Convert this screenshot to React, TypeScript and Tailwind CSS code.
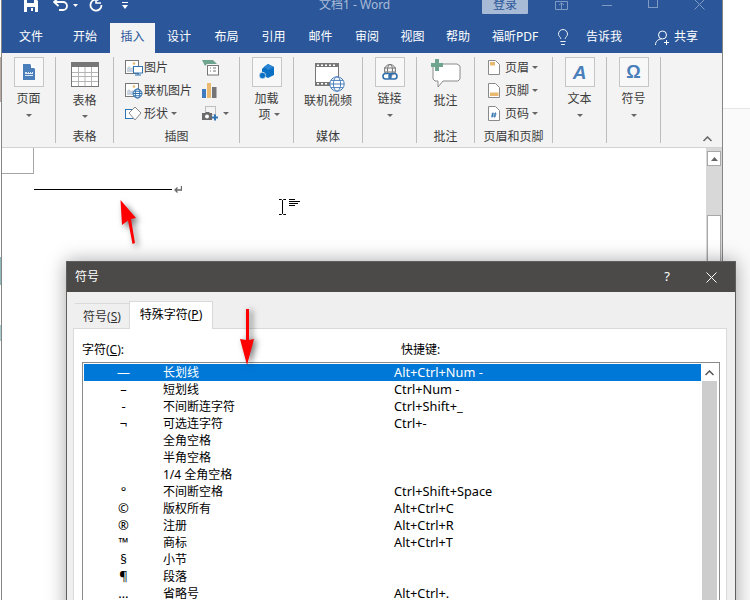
import type { ReactNode } from "react";
import { Lightbulb } from "lucide-react";

const tabs = [
  { label: "文件", w: "w-[58px]" },
  { label: "开始", w: "w-[50px]" },
  { label: "插入", w: "w-[45px]", active: true },
  { label: "设计", w: "w-[48px]" },
  { label: "布局", w: "w-[47px]" },
  { label: "引用", w: "w-[47px]" },
  { label: "邮件", w: "w-[47px]" },
  { label: "审阅", w: "w-[46px]" },
  { label: "视图", w: "w-[45px]" },
  { label: "帮助", w: "w-[46px]" },
];

const rows = [
  ["—", "长划线", "Alt+Ctrl+Num -"],
  ["–", "短划线", "Ctrl+Num -"],
  ["-", "不间断连字符", "Ctrl+Shift+_"],
  ["¬", "可选连字符", "Ctrl+-"],
  ["", "全角空格", ""],
  ["", "半角空格", ""],
  ["", "1/4 全角空格", ""],
  ["°", "不间断空格", "Ctrl+Shift+Space"],
  ["©", "版权所有", "Alt+Ctrl+C"],
  ["®", "注册", "Alt+Ctrl+R"],
  ["™", "商标", "Alt+Ctrl+T"],
  ["§", "小节", ""],
  ["¶", "段落", ""],
  ["…", "省略号", "Alt+Ctrl+."],
];

const Caret = ({ className = "" }: { className?: string }) => (
  <svg width="6" height="3" viewBox="0 0 6 3" className={className}>
    <path d="M0 0h6L3 3z" fill="#666" />
  </svg>
);

const Globe = ({ x, y, r, color }: { x: number; y: number; r: number; color: string }) => (
  <g stroke={color} fill="#fff" strokeWidth="1">
    <circle cx={x} cy={y} r={r} />
    <ellipse cx={x} cy={y} rx={r / 2} ry={r} fill="none" />
    <path d={`M${x - r} ${y}h${r * 2}M${x - r + 1} ${y - r / 2}h${r * 2 - 2}M${x - r + 1} ${y + r / 2}h${r * 2 - 2}`} fill="none" />
  </g>
);

const PictureBase = () => (
  <>
    <rect x="0.5" y="0.5" width="13" height="13" fill="#fff" stroke="#777" />
    <path d="M2 12V8l2-2 2 2 2-1v5z" fill="#c9d3df" />
    <circle cx="9" cy="3.5" r="1.3" fill="#e8b96f" />
  </>
);

const PictureIcon = () => (
  <svg width="18" height="16" viewBox="0 0 18 16">
    <PictureBase />
    <rect x="8.5" y="6.5" width="9" height="6.5" fill="#fff" stroke="#2f75b5" />
    <path d="M13 13v2M10 15h6" stroke="#2f75b5" />
  </svg>
);

const OnlinePictureIcon = () => (
  <svg width="18" height="16" viewBox="0 0 18 16">
    <PictureBase />
    <Globe x={12.5} y={10.5} r={4.5} color="#2f6fad" />
  </svg>
);

const ShapesIcon = () => (
  <svg width="17" height="15" viewBox="0 0 17 15">
    <rect x="0.5" y="3.5" width="10" height="9" fill="#fff" stroke="#2f75b5" />
    <path d="M10 1l6 6-6 7-6-7z" fill="#fff" stroke="#8a8a8a" />
  </svg>
);

const SmartArtIcon = () => (
  <svg width="17" height="16" viewBox="0 0 17 16">
    <path d="M0 0h11l4 4H5L3 6z" fill="#6fa58f" />
    <rect x="5.5" y="5.5" width="11" height="9.5" fill="#fff" stroke="#777" />
    <path d="M8 8h1M11 8h3M8 11h1M11 11h3" stroke="#777" />
  </svg>
);

const ChartIcon = () => (
  <svg width="15" height="15" viewBox="0 0 15 15">
    <rect x="0" y="6" width="4" height="9" fill="#3f7cbf" />
    <rect x="5" y="0" width="4" height="15" fill="#e8b96f" />
    <rect x="10" y="4" width="4.5" height="11" fill="#757575" />
  </svg>
);

const ScreenshotIcon = () => (
  <svg width="17" height="15" viewBox="0 0 17 15">
    <rect x="3.5" y="0.5" width="10" height="8" fill="none" stroke="#888" strokeDasharray="1 1" />
    <path d="M0 7h3l1-1h3l1 1h2v7H0z" fill="#6b6b6b" />
    <circle cx="5" cy="10.5" r="2" fill="#fff" />
    <path d="M10 11.5h6M13 8.5v6" stroke="#2f75b5" strokeWidth="2" />
  </svg>
);

const PageIcon = () => (
  <svg width="12" height="16" viewBox="0 0 12 16">
    <path d="M0 0h7l5 5v11H0z" fill="#4a7fbb" />
    <path d="M8 0l4 4H8z" fill="#fff" />
    <path d="M3 8h1v1h1V8h1v1h1V8h1v1h1V8h1v2H2V8zM2 11h8v1H2z" fill="#dfe9f5" />
  </svg>
);

const TableIcon = () => (
  <svg width="28" height="25" viewBox="0 0 28 25">
    <rect x="0.5" y="0.5" width="27" height="24" fill="#fff" stroke="#777" />
    <rect x="0" y="0" width="28" height="5" fill="#777" />
    <path d="M1 10.5h26M1 14.5h26M1 19.5h26M7.5 5v19M14 5v19M20.5 5v19" stroke="#b5b5b5" />
  </svg>
);

const AddinIcon = () => (
  <svg width="16" height="16" viewBox="0 0 16 16">
    <path d="M9 0l6 3v8l-6 3-4-2V8H3V5l2-2z" fill="#0b6fc4" />
    <path d="M9 0l6 3-6 3-4-3z" fill="#2b86d6" />
    <circle cx="3.5" cy="11.5" r="3.2" fill="#0b6fc4" stroke="#f8f8f8" strokeWidth="0.6" />
  </svg>
);

const VideoIcon = () => (
  <svg width="30" height="29" viewBox="0 0 30 29">
    <rect x="0.5" y="0.5" width="23" height="22" fill="#fff" stroke="#777" />
    <path d="M0 0h24v4H0zM0 19h24v4H0z" fill="#777" />
    <path d="M2 1.5h2v1.5H2zM6 1.5h2v1.5H6zM10 1.5h2v1.5h-2zM14 1.5h2v1.5h-2zM18 1.5h2v1.5h-2zM2 20h2v1.5H2zM6 20h2v1.5H6zM10 20h2v1.5h-2z" fill="#fff" />
    <Globe x={22} y={21} r={7.2} color="#4a7fbb" />
  </svg>
);

const LinkIcon = () => (
  <svg width="16" height="17" viewBox="0 0 16 17">
    <g stroke="#777" fill="none">
      <circle cx="8" cy="6" r="5.5" />
      <ellipse cx="8" cy="6" rx="2.5" ry="5.5" />
      <path d="M2 4h12M2 8h12" />
    </g>
    <rect x="1" y="9.5" width="8" height="5.5" rx="2.7" fill="#fff" stroke="#2f6fad" strokeWidth="1.6" />
    <rect x="7" y="9.5" width="8" height="5.5" rx="2.7" fill="none" stroke="#2f6fad" strokeWidth="1.6" />
  </svg>
);

const CommentIcon = () => (
  <svg width="30" height="29" viewBox="0 0 30 29">
    <path d="M3 5h23l3 2v13l-2 2H12l-5 6v-6H4l-2-2V7z" fill="#fff" stroke="#8a8a8a" />
    <path d="M4 0h4v4h4v4H8v4H4V8H0V4h4z" fill="#6fa58f" />
  </svg>
);

const HeaderDocIcon = ({ kind }: { kind: "top" | "bottom" | "num" }) => (
  <svg width="12" height="15" viewBox="0 0 12 15">
    <path d="M0.5 0.5h7l4 4v10h-11z" fill="#fff" stroke="#8a8a8a" />
    {kind === "top" && <rect x="2" y="2" width="5" height="3.5" fill="#e8b96f" />}
    {kind === "bottom" && <rect x="2" y="9.5" width="8.5" height="3.5" fill="#e8b96f" />}
    {kind === "num" && <path d="M5 6.5l-1 5M7.5 6.5l-1 5M3.5 8h5M3 10h5" stroke="#2f6fad" />}
  </svg>
);

const BoxedIcon = ({ children }: { children: ReactNode }) => (
  <div className="w-[30px] h-[30px] border border-[#c6c6c6] bg-[#f8f8f8] flex items-center justify-center">{children}</div>
);

const SmallItem = ({ icon, label, caret, iconW }: { icon: ReactNode; label?: string; caret?: boolean; iconW: string }) => (
  <div className="h-[23px] flex items-center">
    <div className={`${iconW} flex justify-start`}>{icon}</div>
    {label && <span>{label}</span>}
    {caret && <Caret className="ml-[3px]" />}
  </div>
);

const Group = ({ width, label, children }: { width: string; label?: string; children: ReactNode }) => (
  <div className={`${width} h-[86px] shrink-0 border-r border-[#bdbdbd] flex flex-col`}>
    <div className="h-[73px] flex flex-col items-center">{children}</div>
    <div className="h-[13px] leading-[14px] text-center">{label}</div>
  </div>
);

export default function App() {
  return (
    <div className="relative w-[750px] h-[600px] overflow-hidden bg-white flex text-[12px] text-[#3c3c3c] font-['Noto_Sans','Noto_Sans_CJK_SC',sans-serif]">
      <div className="w-px shrink-0 flex flex-col">
        <div className="h-[57px]" />
        <div className="h-[45px] bg-[#b7a9a0]" />
        <div className="h-[155px]" />
        <div className="h-[28px] bg-[#8fb8b8]" />
        <div className="h-[40px]" />
        <div className="h-[16px] bg-[#a8cccc]" />
      </div>

      {/* word window */}
      <div className="w-[722px] h-[600px] shrink-0 border-x border-[#858585] flex flex-col">
        <div className="h-[23px] bg-[#2b579a] overflow-hidden relative">
          <div className="h-[10px] flex items-center text-[#a9bbd6]">
            <svg width="14" height="14" viewBox="0 0 14 14" className="ml-[22px] shrink-0">
              <path d="M0 0h11l3 3v11H0z" fill="#fff" />
              <path d="M3 0h7v5H3zM3 9h8v5H3z" fill="#2b579a" />
              <rect x="7" y="10" width="2" height="3" fill="#fff" />
            </svg>
            <svg width="16" height="14" viewBox="0 0 16 14" className="ml-[15px] shrink-0">
              <path d="M2 4h8a4 4 0 0 1 0 8H6" fill="none" stroke="#fff" strokeWidth="1.8" />
              <path d="M5.5 0L1 4l4.5 4" fill="none" stroke="#fff" strokeWidth="1.8" />
            </svg>
            <svg width="5" height="3" viewBox="0 0 5 3" className="ml-[4px] shrink-0">
              <path d="M0 0h5L2.5 3z" fill="#fff" />
            </svg>
            <svg width="14" height="14" viewBox="0 0 14 14" className="ml-[11px] shrink-0">
              <path d="M9.5 2.2A5.5 5.5 0 1 0 12.5 7" fill="none" stroke="#fff" strokeWidth="1.8" />
              <path d="M7 0v5h5" fill="none" stroke="#fff" strokeWidth="1.6" />
            </svg>
            <svg width="6" height="7" viewBox="0 0 6 7" className="ml-[19px] shrink-0">
              <path d="M0 0h6v1H0zM0 3h6L3 7z" fill="#fff" />
            </svg>
            <span className="ml-[191px] w-[86px] shrink-0 whitespace-nowrap">文档1  -  Word</span>
            <div className="ml-[77px] w-[46px] h-[28px] mt-[-10px] shrink-0 bg-[#a8bbd6] text-[#2b579a] flex items-end justify-center rounded-[1px] pb-[2px] leading-[14px]">登录</div>
            <svg width="13" height="9" viewBox="0 0 13 9" className="ml-[27px] shrink-0">
              <path d="M0.5 0.5h12v8h-12zM4 4l2.5-2L9 4M6.5 2v6" fill="none" stroke="#7f9ac3" />
            </svg>
            <div className="ml-[34px] w-[10px] h-px bg-[#7f9ac3] shrink-0" />
            <div className="ml-[36px] w-[10px] h-[18px] mt-[-12px] border border-[#7f9ac3] shrink-0" />
            <svg width="11" height="11" viewBox="0 0 11 11" className="ml-[36px] mb-[2px] shrink-0">
              <path d="M0.5 0.5l10 10M10.5 0.5l-10 10" stroke="#7f9ac3" />
            </svg>
          </div>
        </div>

        <div className="h-[30px] bg-[#2b579a] flex text-white leading-[28px] text-[12px]">
          {tabs.map((t) => (
            <div key={t.label} className={`${t.w} shrink-0 text-center ${t.active ? "bg-[#f3f3f3] text-[#2b579a]" : ""}`}>
              {t.label}
            </div>
          ))}
          <div className="w-[64px] shrink-0 pl-[11px] whitespace-nowrap">福昕PDF</div>
          <Lightbulb size={18} strokeWidth={1.2} className="ml-[9px] mt-[5px] shrink-0" />
          <div className="ml-[14px] shrink-0">告诉我</div>
          <svg width="16" height="16" viewBox="0 0 16 16" className="ml-[33px] mt-[7px] shrink-0">
            <circle cx="7.5" cy="5" r="4" fill="none" stroke="#fff" />
            <path d="M0.5 15c0-4 3-6 6-6M11.5 10v5M9 12.5h5" fill="none" stroke="#fff" />
          </svg>
          <div className="ml-[3px] shrink-0">共享</div>
        </div>

        {/* ribbon */}
        <div className="h-[95px] bg-[#f3f3f3] border-b border-[#d2d2d2] pt-[4px] flex relative">
          <Group width="w-[54px]">
            <BoxedIcon><PageIcon /></BoxedIcon>
            <span className="mt-[4px] leading-[16px]">页面</span>
            <Caret className="mt-[7px]" />
          </Group>
          <Group width="w-[58px]" label="表格">
            <div className="mt-[5px]"><TableIcon /></div>
            <span className="mt-[6px] leading-[16px]">表格</span>
            <Caret className="mt-[6px]" />
          </Group>
          <Group width="w-[126px]" label="插图">
            <div className="w-full flex -mt-px">
              <div className="ml-[11px]">
                <SmallItem icon={<PictureIcon />} label="图片" iconW="w-[19px]" />
                <SmallItem icon={<OnlinePictureIcon />} label="联机图片" iconW="w-[19px]" />
                <SmallItem icon={<ShapesIcon />} label="形状" caret iconW="w-[19px]" />
              </div>
              <div className="ml-[10px]">
                <SmallItem icon={<SmartArtIcon />} iconW="w-[18px]" />
                <SmallItem icon={<ChartIcon />} iconW="w-[18px]" />
                <SmallItem icon={<ScreenshotIcon />} caret iconW="w-[18px]" />
              </div>
            </div>
          </Group>
          <Group width="w-[54px]">
            <BoxedIcon><AddinIcon /></BoxedIcon>
            <span className="mt-[4px] leading-[16px]">加载</span>
            <div className="flex items-center leading-[15px] ml-[5px]">项<Caret className="ml-[3px]" /></div>
          </Group>
          <Group width="w-[69px]" label="媒体">
            <div className="mt-[6px] ml-[3px]"><VideoIcon /></div>
            <span className="mt-[1px] leading-[16px]">联机视频</span>
          </Group>
          <Group width="w-[54px]">
            <BoxedIcon><LinkIcon /></BoxedIcon>
            <span className="mt-[4px] leading-[16px]">链接</span>
            <Caret className="mt-[7px]" />
          </Group>
          <Group width="w-[58px]" label="批注">
            <div className="mt-[2px]"><CommentIcon /></div>
            <span className="mt-[5px] leading-[16px]">批注</span>
          </Group>
          <Group width="w-[78px]" label="页眉和页脚">
            <div className="w-full pl-[13px] -mt-px">
              <SmallItem icon={<HeaderDocIcon kind="top" />} label="页眉" caret iconW="w-[17px]" />
              <SmallItem icon={<HeaderDocIcon kind="bottom" />} label="页脚" caret iconW="w-[17px]" />
              <SmallItem icon={<HeaderDocIcon kind="num" />} label="页码" caret iconW="w-[17px]" />
            </div>
          </Group>
          <Group width="w-[54px]">
            <BoxedIcon>
              <span className="text-[19px] leading-none font-bold italic text-[#4a7fbb] font-['Liberation_Sans',sans-serif]">A</span>
            </BoxedIcon>
            <span className="mt-[4px] leading-[16px]">文本</span>
            <Caret className="mt-[7px]" />
          </Group>
          <Group width="w-[54px]">
            <BoxedIcon>
              <span className="text-[18px] leading-none font-bold text-[#4a7fbb] font-['Liberation_Sans',sans-serif]">Ω</span>
            </BoxedIcon>
            <span className="mt-[4px] leading-[16px]">符号</span>
            <Caret className="mt-[7px]" />
          </Group>
          <svg width="9" height="6" viewBox="0 0 9 6" className="absolute right-[10px] bottom-[5px]">
            <path d="M0.5 5l4-4 4 4" fill="none" stroke="#666" strokeWidth="1.5" />
          </svg>
        </div>

        {/* document */}
        <div className="flex-1 flex bg-white">
          <div className="flex-1">
            <div className="w-[32px] h-[26px] border-r border-b border-[#a6a6a6]" />
            <div className="ml-[32px] mt-[14px] flex items-center h-[3px]">
              <div className="w-[138px] h-[1.5px] bg-black" />
              <svg width="8" height="7" viewBox="0 0 8 7" className="ml-[2px]">
                <path d="M7.5 0v4H2M3.5 1.5L1 4l2.5 2.5" fill="none" stroke="#666" strokeWidth="1.3" />
              </svg>
            </div>
          </div>
          <div className="w-[16px] bg-[#d8d8d8] pt-[3px] px-px flex flex-col">
            <div className="h-[15px] bg-white border border-[#a8a8a8] flex items-center justify-center">
              <svg width="7" height="4" viewBox="0 0 7 4"><path d="M3.5 0L7 4H0z" fill="#666" /></svg>
            </div>
            <div className="mt-[49px] flex-1 bg-white border border-[#a8a8a8]" />
          </div>
        </div>
      </div>

      <div className="flex-1 flex flex-col">
        <div className="h-[108px]" />
        <div className="h-px bg-[#e6e6e6]" />
        <div className="flex-1 bg-[#fafafa]" />
      </div>

      {/* text cursor */}
      <div className="absolute left-[279px] top-[199px] flex items-start gap-[3px]">
        <svg width="7" height="16" viewBox="0 0 7 16">
          <path d="M0 0.5h2.5L3.5 1.5 4.5 0.5H7M3.5 1.5v13M0 15.5h2.5l1-1 1 1H7" fill="none" stroke="#000" />
        </svg>
        <svg width="11" height="7" viewBox="0 0 11 7">
          <path d="M0 0.5h6M0 2.5h11M0 4.5h9M0 6.5h6" stroke="#000" />
        </svg>
      </div>

      {/* symbol dialog */}
      <div className="absolute left-[66px] top-[261px] w-[670px] h-[420px] bg-[#efefef] border-x border-t border-[#5f5f5f] shadow-[0_0_18px_rgba(0,0,0,0.35)] text-black">
        <div className="h-[30px] bg-[#4c4a48] text-white flex items-center pl-[8px]">
          <span>符号</span>
          <span className="ml-auto mr-[36px] text-[13px]">?</span>
          <svg width="11" height="11" viewBox="0 0 11 11" className="mr-[18px]">
            <path d="M0.5 0.5l10 10M10.5 0.5l-10 10" stroke="#fff" />
          </svg>
        </div>
        <div className="pl-[6px] pt-[9px]">
          <div className="flex h-[28px] relative z-10 ml-[2px]">
            <div className="w-[54px] mt-[2px] mb-px border-t border-[#d9d9d9] leading-[25px] text-center text-[#333]">
              符号(<span className="underline">S</span>)
            </div>
            <div className="w-[84px] bg-white border-x border-t border-[#d9d9d9] leading-[26px] text-center">
              特殊字符(<span className="underline">P</span>)
            </div>
          </div>
          <div className="w-[654px] h-[300px] -mt-px bg-white border border-[#d9d9d9] pl-[8px]">
            <div className="h-[33px] flex items-end pb-[3px] leading-[18px]">
              <span className="w-[319px]">字符(<span className="underline">C</span>):</span>
              <span>快捷键:</span>
            </div>
            <div className="w-[638px] h-[260px] border border-[#8a8a8a] p-px flex">
              <div className="w-[617px]">
                {rows.map((r, i) => (
                  <div
                    key={r[1]}
                    className={`h-[17px] leading-[17px] grid grid-cols-[79px_231px_1fr] ${i === 0 ? "bg-[#0078d7] text-white" : ""}`}
                  >
                    <span className="text-center text-[13px]">{r[0]}</span>
                    <span>{r[1]}</span>
                    <span className="text-[12.75px]">{r[2]}</span>
                  </div>
                ))}
              </div>
              <div className="ml-px w-[15px] bg-[#cdcdcd]">
                <div className="h-[17px] bg-white flex items-center justify-center">
                  <svg width="9" height="6" viewBox="0 0 9 6"><path d="M0.5 5l4-4 4 4" fill="none" stroke="#555" strokeWidth="1.5" /></svg>
                </div>
              </div>
            </div>
          </div>
        </div>
      </div>

      {/* red annotation arrows */}
      <svg width="30" height="50" viewBox="0 0 30 50" className="absolute left-[115px] top-[198px] drop-shadow-[3px_3px_3px_rgba(0,0,0,0.55)]">
        <path d="M5.5 2L7 27l6-4.5L17.5 46l2.5-1-4-24 5-1z" fill="#fe0000" />
      </svg>
      <svg width="24" height="60" viewBox="0 0 24 60" className="absolute left-[235px] top-[307px] drop-shadow-[3px_1px_3px_rgba(0,0,0,0.55)]">
        <path d="M11 2h3v31l5-1-7 26-7-26 6 1z" fill="#fe0000" />
      </svg>
    </div>
  );
}
